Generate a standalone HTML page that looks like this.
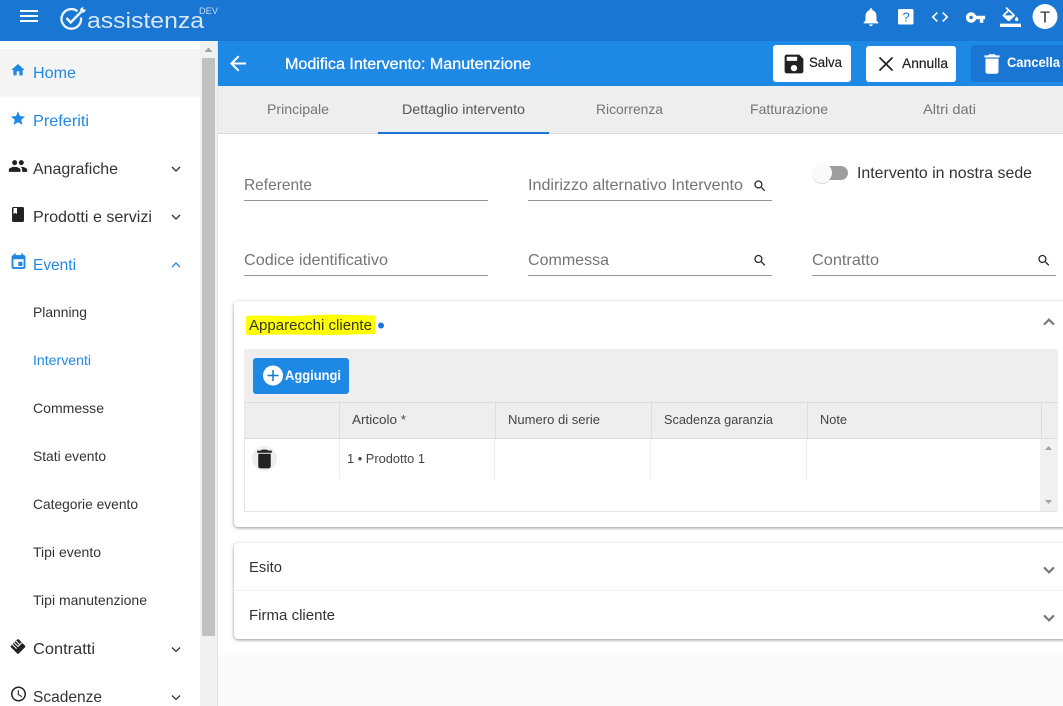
<!DOCTYPE html>
<html lang="it"><head><meta charset="utf-8"><title>Modifica Intervento</title>
<style>
html,body{margin:0;padding:0;background:#fff;overflow:hidden}
svg.root{display:block;font-family:"Liberation Sans",sans-serif}
.d{fill:#333}.b{fill:#1e88e5}.g{fill:#757575}.w{fill:#fff}
.f16{font-size:16px}.f14{font-size:14px}.f13{font-size:13px}
.card{filter:drop-shadow(0 1px 1.500px rgba(0,0,0,.42))}
</style></head><body>
<svg class="root" width="1063" height="706" viewBox="0 0 1063 706" xmlns="http://www.w3.org/2000/svg">
<defs>
<path id="home" d="M10 20v-6h4v6h5v-8h3L12 3 2 12h3v8z"/>
<path id="star" d="M12 17.27L18.18 21l-1.64-7.03L22 9.24l-7.19-.61L12 2 9.19 8.63 2 9.24l5.46 4.73L5.82 21z"/>
<path id="people" d="M16 11c1.66 0 2.99-1.34 2.99-3S17.66 5 16 5c-1.66 0-3 1.34-3 3s1.34 3 3 3zm-8 0c1.66 0 2.99-1.34 2.99-3S9.66 5 8 5C6.34 5 5 6.34 5 8s1.34 3 3 3zm0 2c-2.33 0-7 1.17-7 3.5V19h14v-2.5c0-2.33-4.67-3.5-7-3.5zm8 0c-.29 0-.62.02-.97.05 1.16.84 1.97 1.97 1.97 3.45V19h6v-2.5c0-2.33-4.67-3.5-7-3.5z"/>
<path id="event" d="M17 12h-5v5h5v-5zM16 1v2H8V1H6v2H5c-1.11 0-1.99.9-1.99 2L3 19c0 1.1.89 2 2 2h14c1.1 0 2-.9 2-2V5c0-1.1-.9-2-2-2h-1V1h-2zm3 18H5V8h14v11z"/>
<path id="clock" d="M11.99 2C6.47 2 2 6.48 2 12s4.47 10 9.99 10C17.52 22 22 17.52 22 12S17.52 2 11.99 2zM12 20c-4.42 0-8-3.58-8-8s3.58-8 8-8 8 3.58 8 8-3.58 8-8 8zm.5-13H11v6l5.25 3.15.75-1.23-4.5-2.67z"/>
<path id="bell" d="M12 22c1.1 0 2-.9 2-2h-4c0 1.1.89 2 2 2zm6-6v-5c0-3.07-1.64-5.64-4.5-6.32V4c0-.83-.67-1.5-1.5-1.5s-1.5.67-1.5 1.5v.68C7.63 5.36 6 7.92 6 11v5l-2 2v1h16v-1l-2-2z"/>
<path id="code" d="M9.4 16.6L4.8 12l4.6-4.6L8 6l-6 6 6 6 1.4-1.4zm5.2 0l4.6-4.6-4.6-4.6L16 6l6 6-6 6-1.4-1.4z"/>
<path id="key" d="M12.65 10C11.83 7.67 9.61 6 7 6c-3.31 0-6 2.69-6 6s2.69 6 6 6c2.61 0 4.83-1.67 5.65-4H17v4h4v-4h2v-4H12.65zM7 14c-1.1 0-2-.9-2-2s.9-2 2-2 2 .9 2 2-.9 2-2 2z"/>
<path id="fill" d="M16.56 8.94L7.62 0 6.21 1.41l2.38 2.38-5.15 5.15c-.59.59-.59 1.54 0 2.12l5.5 5.5c.29.29.68.44 1.06.44s.77-.15 1.06-.44l5.5-5.5c.59-.58.59-1.53 0-2.12zM5.21 10L10 5.21 14.79 10H5.21zM19 11.5s-2 2.17-2 3.5c0 1.1.9 2 2 2s2-.9 2-2c0-1.33-2-3.5-2-3.5zM0 20h24v4H0z"/>
<path id="save" d="M17 3H5c-1.11 0-2 .9-2 2v14c0 1.1.89 2 2 2h14c1.1 0 2-.9 2-2V7l-4-4zm-5 16c-1.66 0-3-1.34-3-3s1.34-3 3-3 3 1.34 3 3-1.34 3-3 3zm3-10H5V5h10v4z"/>
<path id="del" d="M6 19c0 1.1.9 2 2 2h8c1.1 0 2-.9 2-2V7H6v12zM19 4h-3.5l-1-1h-5l-1 1H5v2h14V4z"/>
<path id="search" d="M15.5 14h-.79l-.28-.27C15.41 12.59 16 11.11 16 9.5 16 5.91 13.09 3 9.5 3S3 5.91 3 9.5 5.91 16 9.5 16c1.61 0 3.09-.59 4.23-1.57l.27.28v.79l5 4.99L20.49 19l-4.99-5zm-6 0C7.01 14 5 11.99 5 9.5S7.01 5 9.5 5 14 7.01 14 9.5 11.99 14 9.5 14z"/>
<path id="more" d="M16.59 8.59L12 13.17 7.41 8.59 6 10l6 6 6-6z"/>
<path id="less" d="M12 8l-6 6 1.41 1.41L12 10.83l4.59 4.58L18 14z"/>
<path id="back" d="M20 11H7.83l5.59-5.59L12 4l-8 8 8 8 1.41-1.41L7.83 13H20v-2z"/>
</defs>

<!-- backgrounds -->
<rect width="1063" height="706" fill="#fafafa"/>
<rect x="218" y="134" width="845" height="521" fill="#fff"/>
<rect x="0" y="41" width="200" height="665" fill="#fff"/>
<rect x="200" y="41" width="17" height="665" fill="#f1f1f1"/>
<rect x="217" y="41" width="1" height="665" fill="#e4e4e4"/>
<rect x="202" y="58" width="13" height="578" fill="#c1c1c1"/>
<path d="M204.500 52l4-4.500 4 4.500z" fill="#a3a3a3"/>

<!-- top bar -->
<rect width="1063" height="41" fill="#1976d2"/>
<path d="M20 10h18v2H20zM20 15h18v2H20zM20 20h18v2H20z" fill="#fff"/>
<path d="M77.500 11.300A9.800 9.800 0 1 0 81 17.500" fill="none" stroke="#eef5fc" stroke-width="2.300"/>
<path d="M66.500 18l4.200 4.500L81 12" fill="none" stroke="#eef5fc" stroke-width="2.500"/>
<circle cx="82.800" cy="10" r="2.700" fill="#eef5fc"/>
<path d="M83.500 9.300l2.500-2.500" stroke="#1976d2" stroke-width="1.800"/>
<text x="87" y="28" font-size="22" fill="#d8e8f8" textLength="117" lengthAdjust="spacingAndGlyphs">assistenza</text>
<text x="199" y="14" font-size="9.500" fill="#c5dcf3" textLength="19" lengthAdjust="spacingAndGlyphs">DEV</text>

<svg x="860" y="6" width="22" height="22" viewBox="0 0 24 24" fill="#fff"><use href="#bell"/></svg>
<rect x="898" y="9" width="15.500" height="15.500" rx="1.500" fill="#fff"/>
<text x="902.500" y="21.500" font-size="13" fill="#1976d2">?</text>
<svg x="930" y="7" width="20" height="20" viewBox="0 0 24 24" fill="#fff"><use href="#code"/></svg>
<svg x="965" y="7" width="21" height="21" viewBox="0 0 24 24" fill="#fff"><use href="#key"/></svg>
<svg x="1000" y="7" width="21" height="20" viewBox="0 0 24 24" fill="#fff" preserveAspectRatio="none"><use href="#fill"/></svg>
<circle cx="1045" cy="16.500" r="12.500" fill="#fff"/>
<text x="1040" y="22.500" font-size="16" fill="#333" textLength="10" lengthAdjust="spacingAndGlyphs">T</text>

<!-- sidebar -->
<rect x="0" y="49" width="200" height="48" fill="#f5f5f5"/>
<svg x="10" y="62" width="16" height="16" viewBox="0 0 24 24" fill="#1e88e5"><use href="#home"/></svg>
<svg x="9.500" y="110" width="17" height="17" viewBox="0 0 24 24" fill="#1e88e5"><use href="#star"/></svg>
<svg x="8" y="156" width="20" height="20" viewBox="0 0 24 24" fill="#222"><use href="#people"/></svg>
<path d="M13.500 207h9q1.500 0 1.500 1.500v12q0 1.500-1.500 1.500h-9q-1.500 0-1.500-1.500v-12q0-1.500 1.500-1.500z" fill="#222"/>
<path d="M13.500 208h3.500v6l-1.750-1.100-1.750 1.100z" fill="#fff"/>
<svg x="9.500" y="253" width="18" height="18" viewBox="0 0 24 24" fill="#1e88e5" stroke="#1e88e5" stroke-width=".5"><use href="#event"/></svg>
<g transform="rotate(45 18 646.500)">
<rect x="12.500" y="641" width="11" height="11" rx="1" fill="#222"/>
<path d="M12.500 644h6M12.500 646.500h6M12.500 649h6M18 641v5" stroke="#fff" stroke-width="1" fill="none"/>
</g>
<svg x="9.500" y="685" width="18" height="18" viewBox="0 0 24 24" fill="#222"><use href="#clock"/></svg>

<g class="f16">
<text x="33" y="78" class="b" textLength="43" lengthAdjust="spacingAndGlyphs">Home</text>
<text x="33" y="126" class="b" textLength="56" lengthAdjust="spacingAndGlyphs">Preferiti</text>
<text x="33" y="174" class="d" textLength="85" lengthAdjust="spacingAndGlyphs">Anagrafiche</text>
<text x="33" y="222" class="d" textLength="119" lengthAdjust="spacingAndGlyphs">Prodotti e servizi</text>
<text x="33" y="270" class="b" textLength="43" lengthAdjust="spacingAndGlyphs">Eventi</text>
<text x="33" y="654" class="d" textLength="62" lengthAdjust="spacingAndGlyphs">Contratti</text>
<text x="33" y="702" class="d" textLength="69" lengthAdjust="spacingAndGlyphs">Scadenze</text>
</g>
<g class="f14">
<text x="33" y="317" class="d" textLength="54" lengthAdjust="spacingAndGlyphs">Planning</text>
<text x="33" y="365" class="b" textLength="58" lengthAdjust="spacingAndGlyphs">Interventi</text>
<text x="33" y="413" class="d" textLength="71" lengthAdjust="spacingAndGlyphs">Commesse</text>
<text x="33" y="461" class="d" textLength="73" lengthAdjust="spacingAndGlyphs">Stati evento</text>
<text x="33" y="509" class="d" textLength="105" lengthAdjust="spacingAndGlyphs">Categorie evento</text>
<text x="33" y="557" class="d" textLength="68" lengthAdjust="spacingAndGlyphs">Tipi evento</text>
<text x="33" y="605" class="d" textLength="114" lengthAdjust="spacingAndGlyphs">Tipi manutenzione</text>
</g>
<g fill="none" stroke="#333" stroke-width="1.300">
<path d="M172 167l4 4 4-4"/>
<path d="M172 215l4 4 4-4"/>
<path d="M172 647.500l4 4 4-4"/>
<path d="M172 695.500l4 4 4-4"/>
</g>
<path d="M172 267l4-4 4 4" fill="none" stroke="#1e88e5" stroke-width="1.300"/>

<!-- sub header -->
<rect x="218" y="41" width="845" height="45" fill="#1e88e5"/>
<svg x="226" y="51.500" width="24" height="24" viewBox="0 0 24 24" fill="#fff"><use href="#back"/></svg>
<text x="285" y="69" class="w f16" stroke="#fff" stroke-width=".3" textLength="246" lengthAdjust="spacingAndGlyphs">Modifica Intervento: Manutenzione</text>

<rect x="773" y="45" width="78" height="37" rx="3" fill="#fff"/>
<svg x="781.500" y="51.500" width="25" height="25" viewBox="0 0 24 24" fill="#222"><use href="#save"/></svg>
<text x="809" y="67" class="f14" fill="#222" stroke="#222" stroke-width=".2" textLength="33" lengthAdjust="spacingAndGlyphs">Salva</text>
<rect x="866" y="46" width="90" height="36" rx="3" fill="#fff"/>
<path d="M879.500 57.500l13 13M892.500 57.500l-13 13" stroke="#222" stroke-width="1.700" fill="none"/>
<text x="902" y="68" class="f14" fill="#222" stroke="#222" stroke-width=".2" textLength="46" lengthAdjust="spacingAndGlyphs">Annulla</text>
<rect x="971" y="45" width="100" height="37" rx="3" fill="#1976d2"/>
<svg x="979" y="51" width="26" height="26" viewBox="0 0 24 24" fill="#fff"><use href="#del"/></svg>
<text x="1007" y="67" class="f14 w" font-weight="bold" textLength="53" lengthAdjust="spacingAndGlyphs">Cancella</text>

<!-- tabs -->
<rect x="218" y="86" width="845" height="48" fill="#eeeeee"/>
<rect x="218" y="133" width="845" height="1" fill="#d8d8d8"/>
<g class="f14">
<text x="267" y="114" class="g" textLength="62" lengthAdjust="spacingAndGlyphs">Principale</text>
<text x="402" y="114" fill="#555" textLength="123" lengthAdjust="spacingAndGlyphs">Dettaglio intervento</text>
<text x="596" y="114" class="g" textLength="67" lengthAdjust="spacingAndGlyphs">Ricorrenza</text>
<text x="750" y="114" class="g" textLength="78" lengthAdjust="spacingAndGlyphs">Fatturazione</text>
<text x="923" y="114" class="g" textLength="53" lengthAdjust="spacingAndGlyphs">Altri dati</text>
</g>
<rect x="378" y="132" width="171" height="2" fill="#1976d2"/>

<!-- fields -->
<g class="f16 g">
<text x="244" y="190" textLength="68" lengthAdjust="spacingAndGlyphs">Referente</text>
<text x="528" y="190" textLength="215" lengthAdjust="spacingAndGlyphs">Indirizzo alternativo Intervento</text>
<text x="244" y="265" textLength="144" lengthAdjust="spacingAndGlyphs">Codice identificativo</text>
<text x="528" y="265" textLength="81" lengthAdjust="spacingAndGlyphs">Commessa</text>
<text x="812" y="265" textLength="67" lengthAdjust="spacingAndGlyphs">Contratto</text>
</g>
<g fill="#949494">
<rect x="244" y="200" width="244" height="1"/>
<rect x="528" y="200" width="244" height="1"/>
<rect x="244" y="275" width="244" height="1"/>
<rect x="528" y="275" width="244" height="1"/>
<rect x="812" y="275" width="244" height="1"/>
</g>
<svg x="752.500" y="178.500" width="15" height="15" viewBox="0 0 24 24" fill="#222"><use href="#search"/></svg>
<svg x="752.500" y="253" width="15" height="15" viewBox="0 0 24 24" fill="#222"><use href="#search"/></svg>
<svg x="1036.500" y="253" width="15" height="15" viewBox="0 0 24 24" fill="#222"><use href="#search"/></svg>
<rect x="814" y="166" width="34" height="14" rx="7" fill="#9e9e9e"/>
<circle cx="822" cy="174" r="10" fill="#000" opacity=".14"/>
<circle cx="822" cy="173" r="10" fill="#fafafa"/>
<text x="857" y="178" class="f16 d" textLength="175" lengthAdjust="spacingAndGlyphs">Intervento in nostra sede</text>

<!-- panel 1 -->
<rect class="card" x="234" y="301" width="835" height="226" rx="4" fill="#fff"/>
<path d="M246 316.500l5-1 40 .5 40-1.500 44 1 .5 18.500-40 1-50-.5-39.500 .5z" fill="#ffff00"/>
<text x="249" y="330" font-size="14.500" fill="#333" textLength="123" lengthAdjust="spacingAndGlyphs">Apparecchi cliente</text>
<circle cx="381" cy="325.500" r="3" fill="#1976d2"/>
<svg x="1038" y="311" width="22" height="22" viewBox="0 0 24 24" fill="#757575" stroke="#757575" stroke-width=".5"><use href="#less"/></svg>

<rect x="244" y="349" width="814" height="90" fill="#eeeeee"/>
<rect x="244" y="402" width="814" height="1" fill="#dcdcdc"/>
<rect x="244" y="438" width="814" height="1" fill="#dcdcdc"/>
<rect x="253" y="358" width="96" height="36" rx="3" fill="#1e88e5"/>
<circle cx="273" cy="375.500" r="10" fill="#fff"/>
<path d="M267.500 374.750h11v1.500h-11zM272.250 370h1.500v11h-1.500z" fill="#1976d2"/>
<text x="285" y="380" class="f14 w" font-weight="bold" textLength="56" lengthAdjust="spacingAndGlyphs">Aggiungi</text>

<g fill="#dcdcdc">
<rect x="339" y="403" width="1" height="35"/>
<rect x="495" y="403" width="1" height="35"/>
<rect x="651" y="403" width="1" height="35"/>
<rect x="807" y="403" width="1" height="35"/>
<rect x="1041" y="403" width="1" height="35"/>
</g>
<g class="f13" fill="#444">
<text x="352" y="424" textLength="54" lengthAdjust="spacingAndGlyphs">Articolo *</text>
<text x="508" y="424" textLength="92" lengthAdjust="spacingAndGlyphs">Numero di serie</text>
<text x="664" y="424" textLength="109" lengthAdjust="spacingAndGlyphs">Scadenza garanzia</text>
<text x="820" y="424" textLength="27" lengthAdjust="spacingAndGlyphs">Note</text>
</g>

<rect x="244" y="402" width="1" height="110" fill="#e4e4e4"/>
<rect x="244" y="511" width="814" height="1" fill="#e4e4e4"/>
<g fill="#eeeeee">
<rect x="339" y="439" width="1" height="40"/>
<rect x="494" y="439" width="1" height="40"/>
<rect x="650" y="439" width="1" height="40"/>
<rect x="806" y="439" width="1" height="40"/>
</g>
<circle cx="264.500" cy="458.500" r="12.500" fill="#eeeeee"/>
<svg x="252" y="446.500" width="25" height="25" viewBox="0 0 24 24" fill="#222"><use href="#del"/></svg>
<text x="347" y="463" class="f13" fill="#444" textLength="78" lengthAdjust="spacingAndGlyphs">1 • Prodotto 1</text>
<rect x="1040" y="439" width="18" height="72" fill="#f1f1f1"/>
<path d="M1045 450l3.500-4 3.500 4z" fill="#a3a3a3"/>
<path d="M1045 500l3.500 4 3.500-4z" fill="#a3a3a3"/>

<!-- panel 2 -->
<rect class="card" x="234" y="543" width="835" height="96" rx="4" fill="#fff"/>
<rect x="234" y="590" width="829" height="1" fill="#eeeeee"/>
<text x="249" y="572" font-size="14.500" fill="#333" textLength="33" lengthAdjust="spacingAndGlyphs">Esito</text>
<text x="249" y="620" font-size="14.500" fill="#333" textLength="86" lengthAdjust="spacingAndGlyphs">Firma cliente</text>
<svg x="1038" y="559" width="22" height="22" viewBox="0 0 24 24" fill="#757575" stroke="#757575" stroke-width=".5"><use href="#more"/></svg>
<svg x="1038" y="607" width="22" height="22" viewBox="0 0 24 24" fill="#757575" stroke="#757575" stroke-width=".5"><use href="#more"/></svg>
</svg>
</body></html>
